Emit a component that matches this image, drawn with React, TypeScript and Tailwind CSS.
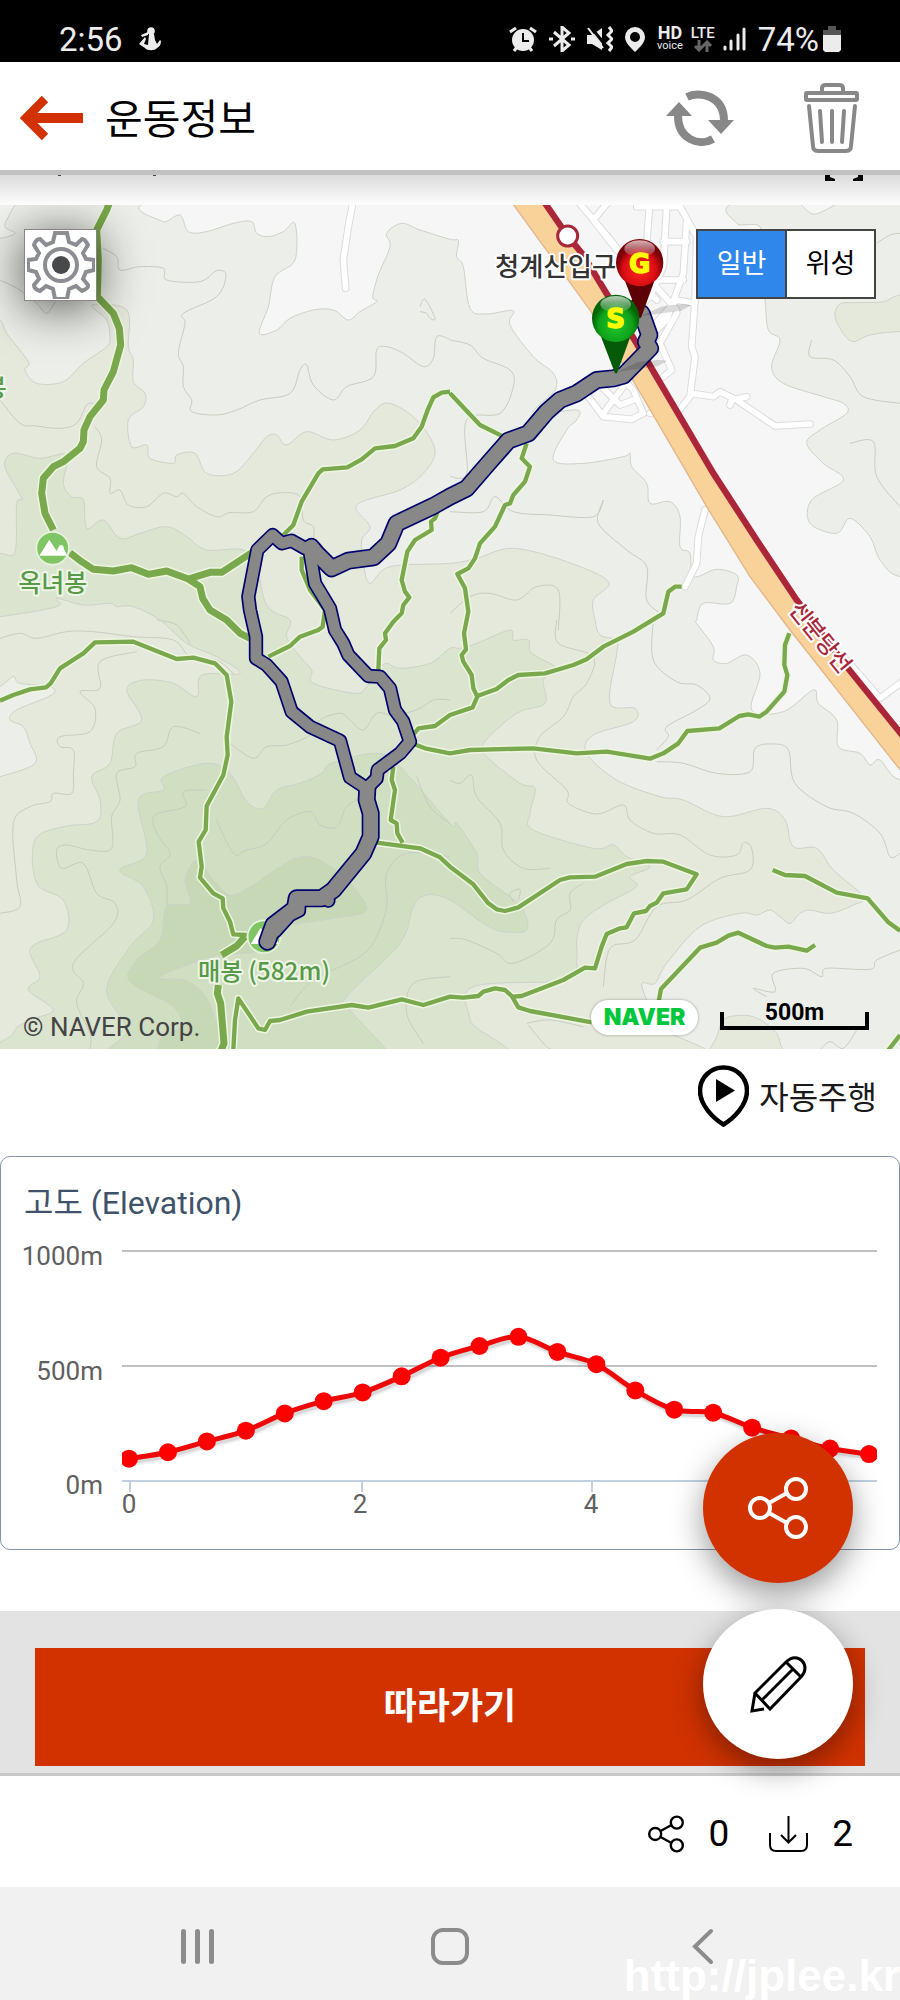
import { useState } from 'react';

type Point = [number, number];

// 지도 좌표는 네 장의 타일(nw, ne, sw, se) 기준으로 적는다
const TILES: Record<string, Point> = {
  nw: [0, 600],
  ne: [1350, 600],
  sw: [0, 1860],
  se: [1350, 1860],
};

function parse(source: string): Point[] {
  let offset: Point = [0, 0];
  const points: Point[] = [];
  source.split(' ').forEach((token) => {
    if (TILES[token]) {
      offset = TILES[token];
      return;
    }
    const [x, y] = token.split(',').map(Number);
    points.push([x + offset[0], y + offset[1]]);
  });
  return points;
}

function line(source: string) {
  return 'M' + parse(source).join('L');
}

function smooth(points: Point[], closed = false) {
  const n = points.length;
  const at = (i: number) => (closed ? points[(i + n) % n] : points[Math.max(0, Math.min(n - 1, i))]);
  let d = `M${points[0]}`;
  for (let i = 0; i < (closed ? n : n - 1); i++) {
    const [p0, p1, p2, p3] = [at(i - 1), at(i), at(i + 1), at(i + 2)];
    d += `C${p1[0] + (p2[0] - p0[0]) / 6},${p1[1] + (p2[1] - p0[1]) / 6} `;
    d += `${p2[0] - (p3[0] - p1[0]) / 6},${p2[1] - (p3[1] - p1[1]) / 6} ${p2}`;
  }
  return closed ? d + 'Z' : d;
}

const TERRAIN = [
  {
    fill: '#f6f6f6',
    area: 'nw 480,0 490,65 540,45 565,95 620,95 700,70 755,65 770,100 805,110 850,95 885,70 885,180 825,230 805,320 778,400 830,390 870,355 940,330 1000,330 1045,360 1080,335 1130,305 1118,290 1135,225 1170,140 1160,100 1205,70 1260,90 1350,118 ne 25,122 20,170 40,200 60,325 110,342 190,332 180,375 250,470 310,520 315,570 250,640 380,630 380,660 350,690 310,780 400,790 520,770 540,760 545,800 590,850 600,910 660,905 690,950 690,1040 720,1060 730,1130 800,1108 860,1125 860,1160 840,1210 760,1210 740,1260 se 740,10 790,80 790,120 830,130 890,105 930,160 905,270 1000,275 1090,210 1105,250 1160,300 1165,380 1230,400 1260,435 1290,420 1350,480 1500,480 1500,-1300 ne 0,-60',
  },
  {
    fill: '#ecefe9',
    area: 'ne 885,0 860,70 930,80 930,170 945,300 955,390 990,420 965,500 1000,550 1120,590 1180,610 1190,640 1110,690 1070,730 1120,790 1180,840 1085,900 1080,970 1160,1000 1200,955 1260,1010 1290,1080 1350,1130 1500,1130 1500,-40',
  },
  { fill: '#f6f6f6', area: 'ne 1050,-10 1075,35 1110,38 1180,-10' },
  {
    fill: '#e5e9dc',
    area: 'ne 1500,260 1350,285 1300,305 1220,308 1170,312 1155,350 1180,400 1210,425 1260,405 1350,395 1500,395',
  },
  { fill: '#f3f4f1', area: 'nw -50,-50 60,-30 30,40 15,80 45,100 0,115 -60,115' },
  {
    fill: '#e5e9dc',
    area: 'nw -60,340 0,360 20,400 85,485 75,510 110,550 190,545 250,490 320,440 330,410 320,360 275,315 380,330 385,440 400,480 400,545 435,580 430,620 385,660 395,740 440,735 450,775 520,790 530,765 585,760 620,820 700,820 760,760 800,710 830,705 860,735 920,695 1000,720 1080,690 1125,630 1170,610 1250,660 1305,750 1270,820 1200,870 1070,915 1110,980 1085,1020 1090,1090 1110,1150 1170,1100 1350,1090 ne 80,1075 190,1045 350,1085 475,1145 430,1200 435,1260 se 450,45 500,60 500,100 480,250 555,265 550,305 430,345 410,400 500,480 630,530 700,540 820,590 950,565 1005,600 1030,680 1100,685 1150,750 1240,830 1210,855 1140,880 1080,870 1050,880 1020,910 990,890 960,870 920,885 870,880 750,920 650,1030 615,1090 575,1095 620,1200 650,1230 640,1350 -1400,1350',
  },
  {
    fill: '#ecefe9',
    area: 'sw -50,220 0,200 40,170 60,190 150,200 155,225 50,270 30,300 70,320 90,370 105,430 0,470 -60,480',
  },
  { fill: '#e5e9dc', area: 'se 770,1350 800,1250 820,1200 860,1187 910,1190 960,1220 988,1260 988,1350' },
  {
    fill: '#dae4cf',
    area: 'nw -60,1065 0,1060 45,1055 50,910 65,895 15,800 40,760 120,775 200,765 190,850 215,890 250,900 260,985 310,960 360,1015 420,1000 500,980 560,1010 620,1050 750,1060 800,1215 870,1260 sw 860,50 900,110 935,150 940,190 1065,220 1100,200 1135,150 1160,130 1200,145 1290,130 1350,85 se 30,85 80,70 180,30 190,60 235,60 245,100 320,145 280,180 285,250 200,280 100,370 110,410 210,490 255,505 240,580 250,630 430,685 490,675 530,710 600,740 540,770 560,800 470,850 400,900 380,960 380,1020 350,1080 70,1100 60,1200 100,1350 sw 40,1350 40,1240 90,1200 160,1170 85,1110 120,1070 90,1000 110,970 200,930 190,840 110,790 105,660 190,620 290,605 300,540 275,470 330,430 350,340 425,300 380,210 430,180 520,190 590,230 605,165 720,160 650,110 560,70 480,0 nw 400,1220 350,1220 330,1210 250,1215 170,1195 170,1220 0,1250 -60,1250',
  },
  {
    fill: '#d0dec2',
    area: 'sw 340,1350 380,1230 320,1110 390,980 460,900 430,800 360,750 440,700 415,540 490,510 490,470 620,430 690,460 740,545 790,565 830,510 900,490 965,460 995,430 1130,400 1200,440 1350,610 se 20,610 80,700 90,760 180,830 220,870 230,930 160,935 100,910 0,840 sw 1280,825 1240,860 1200,970 1040,1130 1050,1170 1160,1290 1200,1350',
  },
  {
    fill: '#c6d8b5',
    area: 'sw 500,1350 480,1260 540,1220 520,1160 390,1085 410,1020 480,960 500,860 570,850 555,780 590,720 640,780 690,825 750,800 900,710 1000,745 1050,790 1100,870 1000,895 900,910 860,920 800,990 640,1010 480,1070 550,1080 600,1110 640,1180 680,1350',
  },
];

const CONTOURS = [
  'nw 0,240 60,270 110,310 140,340 165,305',
  'nw 300,140 350,170 360,210 420,200 490,205 500,240 600,245 650,212 678,225 650,290 550,340 555,370 535,460 550,500 550,560 575,600 575,635 650,645 710,630 780,600 870,580 900,510 920,495 940,555 1000,600 1040,560 1120,530 1130,450 1160,440 1210,460 1270,500 1300,475 1310,410 1350,418',
  'nw 1260,320 1275,298 1305,355 1290,355 1280,340 1260,335',
  'nw 0,600 60,670 110,678 180,685 230,670 260,615 285,610',
  'nw 285,680 305,720 290,800 330,835 330,880 360,870 385,915 440,920 490,880 530,890 550,880 590,920 650,950 690,938 760,935 800,890 850,878 900,890 910,960 940,980 940,1020',
  'ne 0,420 60,435 100,475 180,510 190,560 150,640 50,660 50,820 0,830',
  'ne 0,935 100,935 135,890 190,935 300,945 430,950 460,900 445,970 530,1050 590,1100 590,1200 640,1245',
  'ne 0,1240 60,1190 120,1180 200,1200 260,1160 325,1170 325,1290',
  'ne 1280,130 1320,105 1350,100',
  'ne 1200,730 1270,725 1280,830 1350,920',
  'ne 1085,420 1080,470 1150,480 1200,530 1240,590 1350,610',
  'sw 0,55 60,40 110,55 200,35 280,35 400,50 520,60 570,110 650,120 700,160',
  'sw 470,0 530,15 570,70',
  'sw 410,95 300,125 300,205 240,215 285,265 270,335 180,350 180,380 220,390 220,460 215,520 160,520 150,545 90,560 40,610 50,780 60,860 0,880',
  'sw 690,370 760,415 800,380 860,375 930,345 960,300 1020,280 1050,300 1090,330 1130,280 1180,285 1250,270 1300,240 1350,240',
  'sw 600,340 520,320 490,380 410,400 405,440 350,460 360,540 335,590 335,685 270,690 200,675 170,690 185,745 250,730 290,820 345,850 340,910 220,1030 250,1090 230,1150 270,1240 270,1290',
  'sw 620,510 550,515 555,560 465,585 470,640 510,700 480,740 500,800 500,860',
  'sw 650,600 700,700 740,690 800,670 860,600 930,575 960,615 1010,620 1040,560 1090,530',
  'sw 1350,710 1220,700 1160,760 1160,860 1130,950 1080,1010 940,1080 870,1160',
  'sw 1250,470 1290,560 1350,610',
  'sw 1350,1070 1240,1090 1220,1180 1270,1270',
  'se 320,0 325,70 430,110 410,190 370,230 340,290 270,350 260,420 350,510 355,550 440,582 520,555 540,600 610,640 690,645 780,705 860,705 880,668 905,685 900,750 810,775 710,840 620,860 555,960 480,985 460,1100',
  'se 610,0 610,120 680,185 740,195 780,235 740,270 650,320 655,350 620,390',
  'se 620,425 700,430 800,460 900,455 915,385 970,372 1015,390 1035,490 1130,560 1210,580 1290,640 1320,710 1350,700',
  'se 0,480 30,490 65,465 80,530 150,610 160,690 220,745 300,745',
  'se 0,955 50,960 140,1000 190,1030 300,970 320,900 360,870 360,820 400,790',
  'se 190,845 180,820 210,808 205,840',
  'se 1350,990 1280,1020 1260,1048 1130,1045 1115,1070 1060,1045 970,1060 975,1115 910,1105 950,1130',
  'se 230,1210 300,1200 400,1220',
  'se 235,1215 290,1280 320,1290',
  'se 1110,1290 1140,1265 1180,1285 1220,1230',
];

const TRAILS = [
  'nw 1350,575 1325,578 1300,592 1283,630 1265,680 1240,715 1185,738 1125,745 1085,778 1042,802 968,808 955,820 905,905 880,975 850,1005',
  'nw 1315,930 1305,955 1293,965 1295,990 1245,1020 1222,1055 1205,1140 1215,1175 1228,1192 1210,1215 1205,1240 1180,1265 1155,1300 sw 1158,60 1138,85 1135,150',
  'nw 905,1070 905,1110 930,1170 975,1230 968,1280 sw 955,30 900,50 870,78 805,110',
  'ne 0,580 90,675 160,710',
  'ne 230,730 215,775 240,800 225,845 190,885 180,910 165,915 135,980 90,1030 75,1075 55,1105 22,1122 45,1165 55,1235 42,1300 se 48,88 35,105 40,125 65,165 70,205 82,230 68,262 0,285 sw 1305,318 1255,325 1235,350',
  'ne 695,1160 675,1160 655,1175 640,1240 550,1295 se 460,80 410,118 370,135 285,160 205,165 175,180 140,207 82,228',
  'se 1018,40 1005,75 1003,135 1012,165 1003,215 950,275 928,290 895,283 868,288 808,325 712,333 685,370 640,400 600,416 470,395 380,400 250,385 60,390 0,400 sw 1275,385 1235,370',
  'sw 0,242 40,225 90,208 138,202 152,190 180,145 250,100 285,67 400,65 530,117 580,113 645,130 680,165 694,245 680,350 683,405 670,465 620,558 617,630 596,665 605,740 600,773 640,820 668,835 670,865 690,905 700,943 740,945',
  'sw 1180,440 1175,480 1185,510 1172,600 1190,610 1192,640 1208,668',
  'sw 1130,668 1260,685 1320,712 1350,740 se 70,793 115,850 140,868 165,873 205,862 330,780 360,772 435,770 530,732 590,723 640,725 740,763 710,808 640,820 620,848 600,858 588,873 552,880 530,922 510,925 470,942 455,980 435,1045 405,1043 340,1080 215,1128 190,1130',
  'sw 700,1290 705,1200 715,1135 775,1225 795,1230 810,1203 840,1200 920,1175 1055,1155 1105,1163 1205,1138 1270,1155 1350,1130 se 40,1133 85,1128 100,1115 135,1105 165,1110 185,1128 205,1162 240,1173 425,1207',
  'se 968,750 1005,765 1065,768 1160,818 1253,835 1315,907 1350,932',
  'se 625,1150 633,1107 750,983 800,968 835,947 865,938 950,978 975,983 1015,980 1070,992 1095,975',
  'se 1300,1310 1350,1245',
];

const MAIN_TRAILS = [
  'nw 335,-10 320,30 290,90 295,180 292,290 340,340 358,385 362,435 340,515 312,570 310,600 270,650 252,690 250,725 240,745 190,785 160,800 130,835 125,880 135,940 160,990',
  'nw 210,1058 245,1085 280,1108 340,1113 395,1103 445,1123 500,1113 565,1137 630,1117 665,1117 760,1055',
  'nw 565,1137 600,1160 608,1195 630,1230 680,1260 720,1300 sw 720,40 750,55',
  'sw 735,950 710,978 665,1005',
  'sw 655,1095 652,1120 662,1150 672,1270 660,1300',
];

const STREETS = [
  'ne 380,0 490,130 560,230 620,300',
  'ne 480,0 430,60 500,150',
  'ne 600,0 590,130 600,240 680,330',
  'ne 560,20 690,20 740,110 735,300 725,440 735,470 720,590 680,640 600,640',
  'ne 650,20 640,200 600,290 560,330',
  'ne 710,60 700,220 650,360 610,400',
  'ne 640,125 710,125',
  'ne 620,240 700,240',
  'ne 680,340 630,430 665,510 640,530',
  'ne 735,310 680,300 600,390',
  'ne 415,590 460,650 545,658 580,640 550,570 520,540',
  'ne 455,560 510,615 550,600',
  'ne 460,640 520,560',
  'ne 725,580 790,590 810,575 860,600 975,678 1080,672',
  'ne 840,615 845,600 890,590',
  'ne 765,930 745,1010 740,1090 705,1160',
  'nw 1060,0 1045,80 1030,180 1037,265',
  'se 1190,120 1290,235 1350,190',
];

const LOOP = [
  'ne 555,320 590,375 600,412',
  'sw 1100,505 1050,472 1020,362 930,320 875,275 845,185 800,135 768,115 768,50 750,-30 nw 745,1190 772,1050 818,1005 845,1030 875,1022 915,1045 935,1035 945,1065',
  'nw 930,1060 935,1090 945,1150 990,1225 1005,1290 sw 1030,70 1045,105 1105,168 1140,170 1170,205 1185,270 1210,305 1230,365 1200,400 1133,450 1130,475 1100,505',
  'sw 975,825 985,842',
  'sw 898,850 897,872 870,885 825,935',
];

const SHARED_TRACK = [
  'ne 575,340 598,405 588,425 600,445 520,527 490,535 440,540 380,580 330,600 290,635 235,700 175,722 115,790 50,865 0,890 nw 1300,918 1190,970 1165,1030 1120,1072 1045,1082 995,1105 950,1060 935,1042',
  'sw 1102,505 1100,540 1112,580 1112,650 1090,700 1000,810 965,835 890,835 885,865 820,915 802,965',
];

const CHART = {
  left: 122,
  right: 877,
  top: 21,
  bottom: 251,
};

const ELEVATIONS = [
  97, 125, 172, 219, 294, 347, 385, 455, 536, 587, 627, 561, 508, 394, 310, 297, 232, 185, 141, 117,
];

function StatusBar() {
  return (
    <div className="flex h-[62px] items-center bg-black px-[59px] pt-4 text-[#ececec]">
      <span className="text-[33px] leading-none">2:56</span>
      <svg className="ml-4 h-6 w-[22px]" viewBox="0 0 22 24" fill="currentColor" aria-hidden="true">
        <circle cx="12" cy="4" r="3.8" />
        <path d="M10 7h5l1 6 2 4 3-4 1 1c0 4-2 6-4 7-2 3-10 3-12 0L0 17l6-7 1 2-2 5 4 1z" />
        <path d="M2 8l7-3v3l-6 2z" />
      </svg>
      <div className="ml-auto flex items-center">
        <svg className="h-[26px] w-7" viewBox="0 0 28 26" aria-hidden="true">
          <circle cx="14" cy="14" r="11" fill="currentColor" />
          <path d="M1 6l6-4M27 6l-6-4M5 25l3-4M23 25l-3-4" stroke="currentColor" strokeWidth="3" />
          <path d="M14 7v8h6" stroke="#000" strokeWidth="2" fill="none" />
        </svg>
        <svg className="ml-3 h-[26px] w-[26px]" viewBox="0 0 26 26" fill="none" stroke="currentColor" strokeWidth="3" aria-hidden="true">
          <path d="M5 6l15 13-7 6V1l7 6L5 20" />
          <path d="M0 13h4M22 13h4" />
        </svg>
        <svg className="ml-3 h-[26px] w-[26px]" viewBox="0 0 26 26" fill="none" stroke="currentColor" strokeWidth="3" aria-hidden="true">
          <path d="M0 9h5l10-7v22L5 18H0z" fill="currentColor" stroke="none" />
          <path d="M3 0l16 20" stroke="#000" />
          <path d="M1 2l15 20" strokeWidth="2" />
          <path d="M22 1l3 4-4 4 4 4-4 4 4 4-3 4" />
        </svg>
        <svg className="ml-3 h-[25px] w-5" viewBox="0 0 20 25" fill="currentColor" aria-hidden="true">
          <path fillRule="evenodd" d="M10 0a10 10 0 0 1 10 10c0 6-6 11-10 15C6 21 0 16 0 10A10 10 0 0 1 10 0zm0 5a5 5 0 1 0 0 10 5 5 0 0 0 0-10z" />
        </svg>
        <div className="ml-3 flex flex-col items-center">
          <span className="text-[18px] font-bold leading-[14px]">HD</span>
          <span className="text-[11px] leading-[12px]">voice</span>
        </div>
        <div className="ml-2 flex flex-col items-center">
          <span className="text-[15px] font-medium leading-[14px]">LTE</span>
          <svg className="h-3 w-5" viewBox="0 0 20 12" fill="none" stroke="#666" strokeWidth="3" aria-hidden="true">
            <path d="M6 0v10M2 6l4 4 4-4M14 12V2M10 6l4-4 4 4" />
          </svg>
        </div>
        <svg className="ml-2 h-6 w-[23px]" viewBox="0 0 23 24" stroke="currentColor" strokeWidth="3" strokeLinecap="round" aria-hidden="true">
          <path d="M2 20v2M8 14v8M15 8v14M21 2v20" />
        </svg>
        <span className="ml-3 text-[33px] leading-none">74%</span>
        <svg className="ml-1 h-[26px] w-[18px]" viewBox="0 0 18 26" aria-hidden="true">
          <path d="M5 0h8v4h5v5H0V4h5z" fill="#555" />
          <path d="M0 9h18v15l-2 2H2l-2-2z" fill="currentColor" />
        </svg>
      </div>
    </div>
  );
}

function Header() {
  return (
    <header className="border-b-[5px] border-[#c1c1c1] bg-white">
      <div className="flex h-[108px] items-center pl-5 pr-[41px] pt-1">
        <button aria-label="뒤로" className="cursor-pointer">
          <svg className="h-[46px] w-[63px]" viewBox="0 0 63 46" fill="none" stroke="#d13200" aria-hidden="true">
            <path d="M63 23H8" strokeWidth="10" />
            <path d="M25 4L6 23l19 19" strokeWidth="9" />
          </svg>
        </button>
        <h1 className="ml-[22px] pt-1 text-[41px] leading-none text-black">운동정보</h1>
        <button aria-label="새로고침" className="ml-auto cursor-pointer">
          <svg className="h-14 w-[68px]" viewBox="0 0 68 56" aria-hidden="true">
            <g fill="none" stroke="#888" strokeWidth="8">
              <path d="M21 7c12-6 37-2 37 24" />
              <path d="M47 49C33 57 12 49 12 26" />
            </g>
            <path d="M0 26h26L13 12zM42 30h26L55 44z" fill="#888" />
          </svg>
        </button>
        <button aria-label="삭제" className="ml-[70px] cursor-pointer">
          <svg className="h-[70px] w-[55px]" viewBox="0 0 55 70" fill="none" stroke="#888" strokeWidth="4" strokeLinecap="round" aria-hidden="true">
            <rect x="2" y="10" width="51" height="7" rx="1" />
            <path d="M18 9V5q0-3 4-3h13q4 0 4 3v4M5 23l4 40q0 5 5 5h28q5 0 5-5l4-40M16 28l2 31M28 28v31M40 28l-2 31" />
          </svg>
        </button>
      </div>
    </header>
  );
}

function MountainBadge({ x, y }: { x: number; y: number }) {
  return (
    <g transform={`translate(${x} ${y})`}>
      <circle r="49" fill="#80c563" stroke="#e8f3df" strokeWidth="5" />
      <path d="M-40 22L-10-26 12 8l8-16q12-6 14 10l10 20z" fill="#fff" />
    </g>
  );
}

function Pin({ x, y, label, color }: { x: number; y: number; label: string; color: 'red' | 'green' }) {
  const dark = color === 'red' ? '#5c0005' : '#045a08';
  return (
    <g transform={`translate(${x} ${y})`}>
      <path d="M5 160l60-28q70-12 90-4l-30 16z" fill="#000" opacity="0.14" />
      <path d="M-46 50L46 50 4 165h-6z" fill={dark} />
      <circle r="71" fill={`url(#pin-${color})`} />
      <ellipse cy="-42" rx="46" ry="25" fill="url(#pin-gloss)" />
      <text
        y="30"
        textAnchor="middle"
        fill="#ff0"
        stroke="#ff0"
        strokeWidth="4"
        className="font-['DejaVu_Sans',sans-serif] text-[78px] font-bold"
      >
        {label}
      </text>
    </g>
  );
}

function CourseMap() {
  return (
    <svg className="block w-full" viewBox="0 615 2700 2532" role="img" aria-label="코스 지도">
      <defs>
        <radialGradient id="pin-red" cy="0.65">
          <stop offset="0" stopColor="#ff2a20" />
          <stop offset="0.7" stopColor="#d80c12" />
          <stop offset="1" stopColor="#7a0008" />
        </radialGradient>
        <radialGradient id="pin-green" cy="0.65">
          <stop offset="0" stopColor="#22c52c" />
          <stop offset="0.7" stopColor="#0fa31a" />
          <stop offset="1" stopColor="#046408" />
        </radialGradient>
        <linearGradient id="pin-gloss" x2="0" y2="1">
          <stop offset="0" stopColor="#fff" stopOpacity="0.7" />
          <stop offset="1" stopColor="#fff" stopOpacity="0.1" />
        </linearGradient>
      </defs>
      <rect y="615" width="2700" height="2532" fill="#ecefe9" />
      <g stroke="#ced2c8" strokeWidth="3">
        {TERRAIN.map(({ fill, area }) => (
          <path key={area} d={smooth(parse(area), true)} fill={fill} />
        ))}
      </g>
      <g stroke="#c7cdc0" strokeWidth="3" fill="none">
        {CONTOURS.map((contour) => (
          <path key={contour} d={smooth(parse(contour))} />
        ))}
      </g>

      <g fill="none" strokeLinejoin="round" strokeLinecap="round">
        <path d={STREETS.map(line).join('')} stroke="#dcdcdc" strokeWidth="23" />
        <path d={STREETS.map(line).join('')} stroke="#fff" strokeWidth="17" />
      </g>
      <path
        d={line(
          'ne 180,0 420,330 560,560 770,920 900,1130 1020,1290 se 1360,462 1360,345 1190,140 ne 1040,1200 920,1020 790,820 590,480 400,165 275,-5',
        )}
        fill="#f8d299"
        stroke="#e3b58c"
        strokeWidth="4"
      />
      <path
        d={line('ne 275,-5 353,108 400,165 590,480 790,820 920,1020 1040,1200 se 1190,140 1360,350')}
        fill="none"
        stroke="#ab2639"
        strokeWidth="19"
      />
      <circle cx="1703" cy="708" r="30" fill="#fff" stroke="#a8283b" strokeWidth="9" />

      <g fill="none" strokeLinejoin="round">
        <path d={TRAILS.map(line).join('')} stroke="#eef6e2" strokeWidth="22" />
        <path d={MAIN_TRAILS.map(line).join('')} stroke="#eef6e2" strokeWidth="30" />
        <path d={TRAILS.map(line).join('')} stroke="#7aa84c" strokeWidth="13" />
        <path d={MAIN_TRAILS.map(line).join('')} stroke="#7aa84c" strokeWidth="21" />
      </g>

      <MountainBadge x={158} y={1645} />
      <MountainBadge x={792} y={2810} />

      <g fill="none" strokeLinejoin="round" strokeLinecap="round">
        <g stroke="#00006e">
          <path d={LOOP.map(line).join('')} strokeWidth="43" />
          <path d={SHARED_TRACK.map(line).join('')} strokeWidth="54" />
        </g>
        <g stroke="#888">
          <path d={LOOP.map(line).join('')} strokeWidth="33" />
          <path d={SHARED_TRACK.map(line).join('')} strokeWidth="44" />
        </g>
      </g>

      <g
        className="font-['Noto_Sans_CJK_KR',sans-serif] font-medium"
        stroke="#fff"
        strokeWidth="12"
        strokeLinejoin="round"
        paintOrder="stroke"
      >
        <g fill="#58994a" stroke="#eef6e6">
          <text x="158" y="1776" textAnchor="middle" className="text-[75px]">
            옥녀봉
          </text>
          <text x="792" y="2940" textAnchor="middle" className="text-[73px]">
            매봉 (582m)
          </text>
          <text x="20" y="1190" textAnchor="end" className="text-[75px]">
            봉
          </text>
        </g>
        <text x="1667" y="828" textAnchor="middle" fill="#333" className="text-[79px]">
          청계산입구
        </text>
        <text
          transform="translate(2460 1913) rotate(51)"
          y="22"
          textAnchor="middle"
          fill="#a8283b"
          className="text-[68px]"
        >
          신분당선
        </text>
      </g>

      <Pin x={1919} y={788} label="G" color="red" />
      <Pin x={1847} y={955} label="S" color="green" />
    </svg>
  );
}

function GearIcon() {
  return (
    <svg className="h-[68px] w-[68px]" viewBox="-34 -34 68 68" fill="none" aria-hidden="true">
      <path
        d="M-6-32H6l2 9 7 3 6-6q3 0 6 6l-5 8 3 6 8 1v10l-8 2-3 7 5 6q1 3-6 6l-6-5-7 3-2 10H-6l-2-10-7-3-6 5q-6-2-6-6l5-6-3-7-8-2V-5l8-1 3-6-5-8q2-6 6-6l6 6 7-3z"
        stroke="#8b8d92"
        strokeWidth="4"
      />
      <circle r="16" stroke="#8b8d92" strokeWidth="4" />
      <circle r="9" fill="#48494b" />
    </svg>
  );
}

function MapSection() {
  const [mode, setMode] = useState('일반');
  return (
    <section className="relative overflow-hidden">
      <CourseMap />
      <button
        aria-label="지도 설정"
        className="absolute left-6 top-6 flex h-[72px] w-[73px] cursor-pointer items-center justify-center border border-[#8c8484] bg-white shadow-[0_6px_48px_rgba(0,0,0,0.65)]"
      >
        <GearIcon />
      </button>
      <div className="absolute right-6 top-6 flex h-[70px] w-[180px] divide-x-2 divide-[#444] border-2 border-[#444]">
        {['일반', '위성'].map((name) => (
          <button
            key={name}
            aria-pressed={mode === name}
            onClick={() => setMode(name)}
            className={`flex-1 cursor-pointer text-[27px] leading-none ${
              mode === name ? 'bg-[#2f86eb] text-white' : 'bg-white text-black'
            }`}
          >
            {name}
          </button>
        ))}
      </div>
      <p className="absolute bottom-[7px] left-[23px] text-[26px] leading-[30px] text-[#444]">© NAVER Corp.</p>
      <div className="absolute bottom-[14px] right-[31px] flex items-end gap-[22px]">
        <a
          href="#naver"
          className="flex h-[35px] w-[107px] items-center justify-center rounded-full bg-white font-['Inter','Lato',sans-serif] text-[23px] font-black leading-none text-[#03c73c] shadow-[0_0_3px_rgba(0,0,0,0.35)]"
        >
          NAVER
        </a>
        <div className="mb-[5px] flex h-[18px] w-[149px] items-end justify-center border-4 border-t-0 border-black text-[23px] font-bold leading-[26px] text-black">
          500m
        </div>
      </div>
    </section>
  );
}

function ElevationChart() {
  const { left, right, top, bottom } = CHART;
  const points = ELEVATIONS.map(
    (e, i): Point => [129 + (i * 740) / 19, bottom - (e * (bottom - top)) / 1000],
  );
  const curve = smooth(points);
  return (
    <section className="rounded-[10px] border border-[#8496aa] bg-white pt-[27px]">
      <h2 className="px-[23px] text-[32px] leading-[38px] text-[#3e5369]">고도 (Elevation)</h2>
      <svg className="mt-[14px] block w-full" viewBox="1 6 898 313" role="img" aria-label="고도 그래프">
        <clipPath id="plot">
          <rect x={left} y="0" width={right - left} height="300" />
        </clipPath>
        <path d={`M${left} ${top}H${right}M${left} 136H${right}`} stroke="#c0c0c0" strokeWidth="2" />
        <path
          d={`M${left} ${bottom}H${right}M130 ${bottom}v11M362 ${bottom}v11M592 ${bottom}v11M823 ${bottom}v11`}
          stroke="#c0d0e0"
          strokeWidth="2"
        />
        <g clipPath="url(#plot)" fill="none">
          <path d={curve} stroke="#000" strokeOpacity="0.05" strokeWidth="9" transform="translate(2 3)" />
          <path d={curve} stroke="#000" strokeOpacity="0.1" strokeWidth="5" transform="translate(2 3)" />
          <path d={curve} stroke="#ee0808" strokeWidth="5" />
          {points.map(([x, y]) => (
            <circle key={x} cx={x} cy={y} r="9" fill="#f00" />
          ))}
        </g>
        <g fill="#606060" className="text-[26px]">
          <g textAnchor="end">
            <text x="103" y="35">1000m</text>
            <text x="103" y="150">500m</text>
            <text x="103" y="264">0m</text>
          </g>
          <g textAnchor="middle">
            <text x="129" y="283">0</text>
            <text x="360" y="283">2</text>
            <text x="591" y="283">4</text>
          </g>
        </g>
      </svg>
    </section>
  );
}

function ShareIcon({ className }: { className: string }) {
  return (
    <svg className={className} viewBox="0 0 60 62" fill="none" stroke="currentColor" aria-hidden="true">
      <circle cx="12" cy="31" r="10" />
      <circle cx="48" cy="12" r="10" />
      <circle cx="48" cy="50" r="10" />
      <path d="M21 26l18-10M21 36l18 10" />
    </svg>
  );
}

function FloatingActions() {
  return (
    <div className="absolute bottom-[17px] right-[47px] flex flex-col-reverse gap-[26px]">
      <button
        aria-label="편집"
        className="flex h-[150px] w-[150px] cursor-pointer items-center justify-center rounded-full bg-white shadow-[0_10px_30px_rgba(0,0,0,0.4)]"
      >
        <svg className="h-[57px] w-[57px]" viewBox="0 0 57 57" fill="none" stroke="#000" strokeWidth="3" aria-hidden="true">
          <path d="M5 37L36 6c12-12 26 4 15 15L20 53zM5 37L2 55l12-2M36 6l15 15M12 44l31-31" />
        </svg>
      </button>
      <button
        aria-label="공유"
        className="flex h-[150px] w-[150px] cursor-pointer items-center justify-center rounded-full bg-[#d13200] text-white shadow-[0_12px_32px_rgba(0,0,0,0.4)]"
      >
        <ShareIcon className="h-[62px] w-[60px] stroke-[4]" />
      </button>
    </div>
  );
}

function NavigationBar() {
  return (
    <nav className="relative grid h-[113px] grid-cols-3 overflow-hidden bg-[#f1f1f1] px-[71px] pt-[6px]">
      <button aria-label="최근 앱" className="flex cursor-pointer items-center justify-center gap-[9px]">
        <span className="h-[35px] w-[5px] rounded-full bg-[#8c8c8c]" />
        <span className="h-[35px] w-[5px] rounded-full bg-[#8c8c8c]" />
        <span className="h-[35px] w-[5px] rounded-full bg-[#8c8c8c]" />
      </button>
      <button aria-label="홈" className="flex cursor-pointer items-center justify-center">
        <span className="h-[37px] w-[38px] rounded-[12px] border-4 border-[#8c8c8c]" />
      </button>
      <button aria-label="이전" className="flex cursor-pointer items-center justify-center">
        <svg className="h-[37px] w-[22px]" viewBox="0 0 22 37" fill="none" stroke="#8c8c8c" strokeWidth="4" strokeLinecap="round" aria-hidden="true">
          <path d="M19 3L3 18.500l16 15.500" />
        </svg>
      </button>
      <span className="pointer-events-none absolute bottom-0 right-0 font-['Liberation_Sans',sans-serif] text-[44px] font-bold leading-[48px] text-white">
        http://jplee.kr
      </span>
    </nav>
  );
}

export default function App() {
  return (
    <div className="w-full bg-white font-['Roboto','Noto_Sans_CJK_KR',sans-serif]">
      <StatusBar />
      <Header />
      <main className="relative">
        <div className="h-[30px] bg-linear-to-b from-[#dcdcdc] to-[#fdfdfd] pl-[58px] pr-[37px]">
          <div className="flex">
            <span className="h-px w-[3px] bg-[#444]" />
            <span className="ml-[92px] h-px w-[3px] bg-[#444]" />
            <svg className="ml-auto h-[6px] w-[38px]" viewBox="0 0 38 6" aria-hidden="true">
              <path d="M0 0h5v2l5 2v2H0zM38 0h-5v2l-5 2v2h10z" />
            </svg>
          </div>
        </div>
        <MapSection />
        <div className="flex h-[107px] items-start justify-end pr-[23px] pt-4">
          <button className="flex cursor-pointer items-center gap-[10px]">
            <svg className="h-[62px] w-[51px]" viewBox="0 0 51 62" aria-hidden="true">
              <path d="M25.500 2.500C38 2.500 49 12 49 26c0 14-13 27-23.500 33.500C15 53 2 40 2 26 2 12 13 2.500 25.500 2.500z" fill="none" stroke="#000" strokeWidth="4.500" />
              <path d="M18 14v23l19-11.500z" />
            </svg>
            <span className="pt-[3px] text-[32px] leading-none text-[#1a1a1a]">자동주행</span>
          </button>
        </div>
        <ElevationChart />
        <div className="mt-[61px] border-b-[3px] border-[#c9c9c9] bg-[#e3e3e3] px-[35px] pb-[7px] pt-[37px]">
          <button className="h-[118px] w-full cursor-pointer bg-[#d13200] text-[36px] font-bold leading-none text-white">
            따라가기
          </button>
        </div>
        <FloatingActions />
      </main>
      <div className="flex h-[111px] items-center justify-end bg-white pr-[47px] pt-1 text-[37px] leading-none text-black">
        <ShareIcon className="h-[38px] w-9 stroke-[4]" />
        <span className="ml-6">0</span>
        <svg className="ml-[40px] h-9 w-[39px]" viewBox="0 0 39 36" fill="none" stroke="currentColor" strokeWidth="2" aria-hidden="true">
          <path d="M1 17v12q0 6 6 6h25q6 0 6-6V17M19.500 0v26M12 19l7.500 7.500L27 19" />
        </svg>
        <span className="ml-6">2</span>
      </div>
      <NavigationBar />
    </div>
  );
}
